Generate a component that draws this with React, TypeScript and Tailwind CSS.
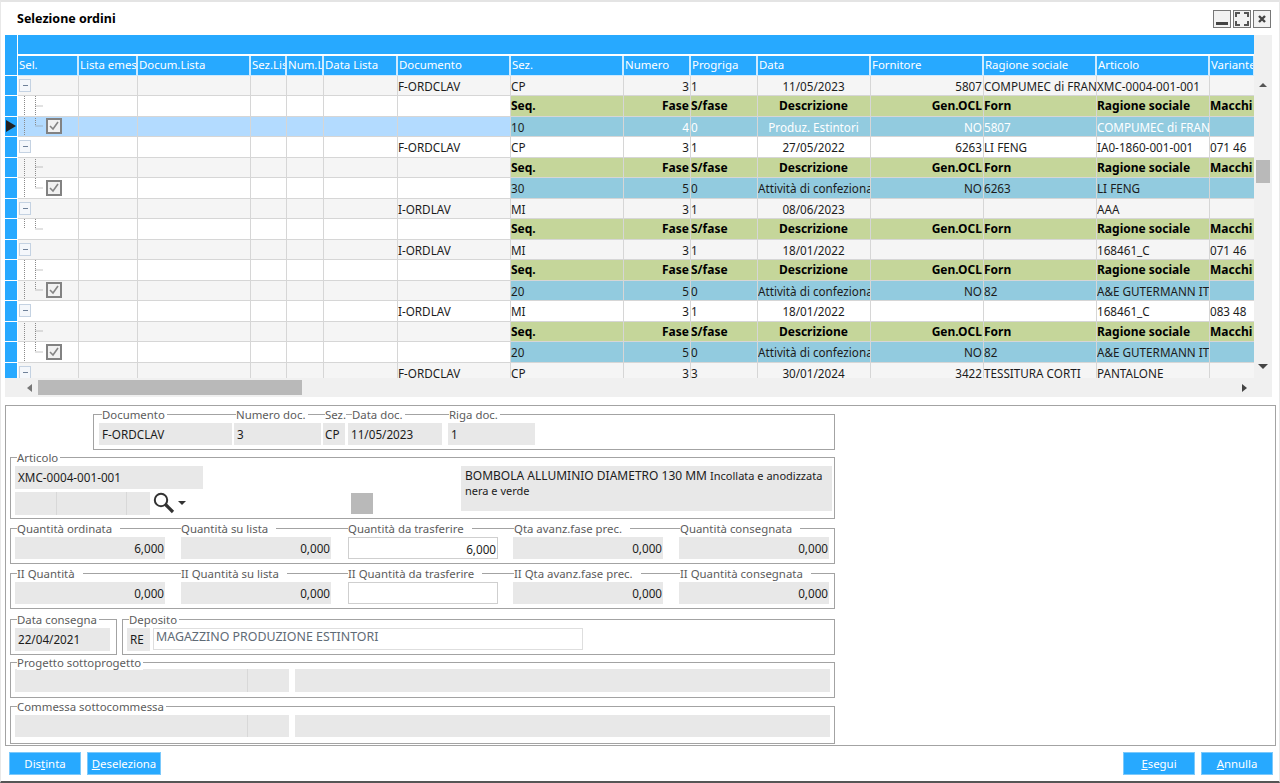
import React from "react";

const colsWide = "grid grid-cols-[61px_59px_113px_36px_37px_74px_113px_113px_67px_67px_113px_113px_113px_113px_45px] shrink-0";
const cell = "border-r border-b border-[#d6d6d6] h-full pr-[1px] overflow-hidden whitespace-nowrap leading-[20px]";
const heads = ["Sel.", "Lista emes", "Docum.Lista", "Sez.Lis", "Num.L", "Data Lista", "Documento", "Sez.", "Numero", "Progriga", "Data", "Fornitore", "Ragione sociale", "Articolo", "Variante"];

type Row =
  | { t: "m"; v: string[] }
  | { t: "h"; last?: boolean }
  | { t: "d"; v: string[]; sel?: boolean };

const rows: Row[] = [
  { t: "m", v: ["F-ORDCLAV", "CP", "3", "1", "11/05/2023", "5807", "COMPUMEC di FRAN", "XMC-0004-001-001", ""] },
  { t: "h" },
  { t: "d", sel: true, v: ["10", "4", "0", "Produz. Estintori", "NO", "5807", "COMPUMEC di FRAN", ""] },
  { t: "m", v: ["F-ORDCLAV", "CP", "3", "1", "27/05/2022", "6263", "LI FENG", "IA0-1860-001-001", "071 46"] },
  { t: "h" },
  { t: "d", v: ["30", "5", "0", "Attività di confezionamento", "NO", "6263", "LI FENG", ""] },
  { t: "m", v: ["I-ORDLAV", "MI", "3", "1", "08/06/2023", "", "", "AAA", ""] },
  { t: "h", last: true },
  { t: "m", v: ["I-ORDLAV", "MI", "3", "1", "18/01/2022", "", "", "168461_C", "071 46"] },
  { t: "h" },
  { t: "d", v: ["20", "5", "0", "Attività di confezionamento", "NO", "82", "A&E GUTERMANN IT", ""] },
  { t: "m", v: ["I-ORDLAV", "MI", "3", "1", "18/01/2022", "", "", "168461_C", "083 48"] },
  { t: "h" },
  { t: "d", v: ["20", "5", "0", "Attività di confezionamento", "NO", "82", "A&E GUTERMANN IT", ""] },
  { t: "m", v: ["F-ORDCLAV", "CP", "3", "3", "30/01/2024", "3422", "TESSITURA CORTI", "PANTALONE", ""] },
];

function Tree({ kind }: { kind: "h" | "hl" | "d" }) {
  return (
    <svg width="28" height="20" className="shrink-0" fill="none" stroke="#8a8a8a" strokeWidth="1" strokeDasharray="1 1">
      {kind !== "hl" && <path d="M6.5 0V20" />}
      {kind === "hl" && <path d="M6.5 0V10" />}
      <path d={kind === "h" ? "M17.5 0V20M17.5 10H25" : "M17.5 0V10M17.5 10H25"} />
    </svg>
  );
}

function Check() {
  return (
    <svg width="16" height="16" className="shrink-0" viewBox="0 0 16 16" fill="none">
      <rect x="1" y="1" width="14" height="14" fill="#f1f1f1" stroke="#828282" strokeWidth="2" />
      <path d="M4 8l3 3 5-7" stroke="#858585" strokeWidth="1.6" />
    </svg>
  );
}

function Minus() {
  return (
    <span className="flex items-center justify-center w-[12px] h-[13px] ml-[1px] bg-[#f4f7fb] border border-[#c4d2e2]">
      <span className="w-[5px] h-[1px] bg-[#6f8199]" />
    </span>
  );
}

function LeftCells({ row, bg }: { row: Row; bg: string }) {
  const widths = [1, 2, 3, 4, 5];
  return (
    <>
      <div className={`${cell} ${bg} flex items-center !pr-0`}>
        {row.t === "m" && <Minus />}
        {row.t === "h" && <Tree kind={row.last ? "hl" : "h"} />}
        {row.t === "d" && (
          <>
            <Tree kind="d" />
            <Check />
          </>
        )}
      </div>
      {widths.map((i) => (
        <div key={i} className={`${cell} ${bg}`} />
      ))}
    </>
  );
}

function GridRow({ row, i }: { row: Row; i: number }) {
  const stripe = i % 2 === 0 ? "bg-[#f5f5f5]" : "bg-white";
  if (row.t === "m") {
    const [doc, sez, num, prog, data, forn, rag, art, vari] = row.v;
    return (
      <div className={`${colsWide} h-[20.5px]`}>
        <LeftCells row={row} bg={stripe} />
        <div className={`${cell} ${stripe}`}>{doc}</div>
        <div className={`${cell} ${stripe}`}>{sez}</div>
        <div className={`${cell} ${stripe} text-right`}>{num}</div>
        <div className={`${cell} ${stripe}`}>{prog}</div>
        <div className={`${cell} ${stripe} text-center`}>{data}</div>
        <div className={`${cell} ${stripe} text-right`}>{forn}</div>
        <div className={`${cell} ${stripe}`}>{rag}</div>
        <div className={`${cell} ${stripe}`}>{art}</div>
        <div className={`${cell} ${stripe}`}>{vari}</div>
      </div>
    );
  }
  if (row.t === "h") {
    const g = "bg-[#c5d69a] font-bold text-[12px] text-black";
    return (
      <div className={`${colsWide} h-[20.5px]`}>
        <LeftCells row={row} bg={stripe} />
        <div className={`${cell} ${stripe}`} />
        <div className={`${cell} ${g}`}>Seq.</div>
        <div className={`${cell} ${g} text-right`}>Fase</div>
        <div className={`${cell} ${g}`}>S/fase</div>
        <div className={`${cell} ${g} text-center`}>Descrizione</div>
        <div className={`${cell} ${g} text-right`}>Gen.OCL</div>
        <div className={`${cell} ${g}`}>Forn</div>
        <div className={`${cell} ${g}`}>Ragione sociale</div>
        <div className={`${cell} ${g}`}>Macchi</div>
      </div>
    );
  }
  const left = row.sel ? "bg-[#b3dbff]" : stripe;
  const d = "bg-[#92cbdf]";
  const w = row.sel ? "text-white" : "";
  const [seq, fase, sf, des, gen, forn, rag, mac] = row.v;
  return (
    <div className={`${colsWide} h-[20.5px]`}>
      <LeftCells row={row} bg={left} />
      <div className={`${cell} ${left}`} />
      <div className={`${cell} ${d}`}>{seq}</div>
      <div className={`${cell} ${d} ${w} text-right`}>{fase}</div>
      <div className={`${cell} ${d} ${w}`}>{sf}</div>
      <div className={`${cell} ${d} ${w} ${row.sel ? "text-center" : ""}`}>{des}</div>
      <div className={`${cell} ${d} ${w} text-right`}>{gen}</div>
      <div className={`${cell} ${d} ${w}`}>{forn}</div>
      <div className={`${cell} ${d} ${w}`}>{rag}</div>
      <div className={`${cell} ${d}`}>{mac}</div>
    </div>
  );
}

function Group({ className, children }: { className: string; children?: React.ReactNode }) {
  return <div className={`relative border border-[#a3a3a3] flex shrink-0 ${className}`}>{children}</div>;
}

function Legend({ className, children }: { className: string; children: React.ReactNode }) {
  return (
    <span className={`absolute -top-[7px] bg-white leading-[14px] text-[11.4px] text-[#5c5c5c] whitespace-nowrap ${className}`}>{children}</span>
  );
}

function Input({ className, children }: { className: string; children?: React.ReactNode }) {
  return (
    <div className={`h-[23px] bg-[#e8e8e8] px-[3px] leading-[23px] whitespace-nowrap overflow-hidden shrink-0 ${className}`}>{children}</div>
  );
}

function QtyGroup({ labels, values, className }: { labels: string[]; values: string[]; className: string }) {
  const pos = ["left-[6px]", "left-[170px]", "left-[337px]", "left-[503px]", "left-[669px]"];
  return (
    <Group className={`w-[825px] h-[36px] pl-[4px] pt-[8px] gap-[16px] ${className}`}>
      {labels.map((l, i) => (
        <Legend key={l} className={`${pos[i]} pr-[8px]`}>
          {l}
        </Legend>
      ))}
      {values.map((v, i) => (
        <Input key={i} className={`w-[150px] text-right !h-[22px] !pr-[1px] ${i === 2 ? "!bg-white border border-[#cfcfcf] ml-[1px] -mr-[1px]" : ""}`}>
          {v}
        </Input>
      ))}
    </Group>
  );
}

function Btn({ children, className = "" }: { children: React.ReactNode; className?: string }) {
  return (
    <button className={`h-[23px] bg-[#27a9ff] border border-[#7cc9fb] text-white text-[11.4px] text-center leading-[21px] ${className}`}>{children}</button>
  );
}

function WinBtn({ children }: { children: React.ReactNode }) {
  return (
    <span className="w-[18px] h-[18px] border border-[#777] bg-[#f2f2f2] flex items-center justify-center">{children}</span>
  );
}

export default function App() {
  return (
    <div className="w-[1280px] h-[783px] bg-white border-t-2 border-t-[#e4e4e4] border-b-2 border-b-[#555] border-x border-x-[#e8e8e8] flex flex-col overflow-hidden text-[11.7px] text-[#1c1c1c] font-['Noto_Sans','Open_Sans',sans-serif]">
      <div className="h-[33px] shrink-0 flex items-start justify-between pl-[16px] pr-[8px] pt-[8px]">
        <span className="font-bold text-black text-[12.5px] leading-[18px]">Selezione ordini</span>
        <div className="flex gap-[2px]">
          <WinBtn>
            <span className="w-[12px] h-[3px] bg-[#444] mt-[9px]" />
          </WinBtn>
          <WinBtn>
            <svg width="14" height="14" fill="none" stroke="#555" strokeWidth="2">
              <path d="M1 5V1H5M9 1H13V5M13 9V13H9M5 13H1V9" />
            </svg>
          </WinBtn>
          <WinBtn>
            <svg width="10" height="10" stroke="#444" strokeWidth="2.4">
              <path d="M2 2L8 8M8 2L2 8" />
            </svg>
          </WinBtn>
        </div>
      </div>

      <div className="ml-[4px] flex h-[362px] shrink-0 w-[1267px]">
        <div className="w-[1249px] flex flex-col">
          <div className="h-[343px] shrink-0 flex overflow-hidden">
            <div className="w-[12px] shrink-0 mr-[1px] flex flex-col">
              <div className="h-[40.5px] shrink-0 bg-[#27a9ff] border-b border-white" />
              {rows.map((r, i) => (
                <div key={i} className="h-[20.5px] shrink-0 bg-[#27a9ff] border-b border-white flex items-center">
                  {i === 2 && <span className="w-0 h-0 ml-[1px] border-y-[6px] border-y-transparent border-l-[10px] border-l-[#222]" />}
                </div>
              ))}
            </div>
            <div className="flex-1 min-w-0 flex flex-col">
              <div className="h-[20.5px] shrink-0 bg-[#27a9ff] border-b-2 border-white" />
              <div className={`${colsWide} h-[20px]`}>
                {heads.map((h) => (
                  <div key={h} className="bg-[#27a9ff] text-white text-[11.4px] border-r-2 border-b border-[#cdeaff] pl-[1px] overflow-hidden whitespace-nowrap leading-[17px]">
                    {h}
                  </div>
                ))}
              </div>
              {rows.map((r, i) => (
                <GridRow key={i} row={r} i={i} />
              ))}
            </div>
          </div>
          <div className="h-[19px] shrink-0 bg-[#f0f0f0] flex items-center pl-[22px] pr-[7px]">
            <span className="w-0 h-0 border-y-[4px] border-y-transparent border-r-[5px] border-r-[#777]" />
            <span className="ml-[6px] w-[264px] h-[15px] bg-[#b9b9b9]" />
            <span className="ml-auto w-0 h-0 border-y-[4px] border-y-transparent border-l-[5px] border-l-[#444]" />
          </div>
        </div>
        <div className="w-[18px] bg-[#f0f0f0] flex flex-col items-center pt-[48px] pb-[28px]">
          <span className="w-0 h-0 border-x-[4px] border-x-transparent border-b-[4px] border-b-[#555]" />
          <span className="mt-[73px] w-[14px] h-[23px] bg-[#b9b9b9]" />
          <span className="mt-auto w-0 h-0 border-x-[5px] border-x-transparent border-t-[5px] border-t-[#444]" />
        </div>
      </div>

      <div className="ml-[4px] mt-[8px] w-[1271px] h-[341px] shrink-0 border border-[#a3a3a3] pl-[4px] pt-[8px] flex flex-col">
        <Group className="ml-[83px] w-[742px] h-[36px] pl-[5px] pt-[8px]">
          <Legend className="left-[8px] pr-[2px]">Documento</Legend>
          <Legend className="left-[142px] pr-[2px]">Numero doc.</Legend>
          <Legend className="left-[231px]">Sez.</Legend>
          <Legend className="left-[258px] pr-[2px]">Data doc.</Legend>
          <Legend className="left-[355px] pr-[2px]">Riga doc.</Legend>
          <Input className="w-[133px] !h-[22px]">F-ORDCLAV</Input>
          <Input className="w-[87px] ml-[2px] !h-[22px]">3</Input>
          <Input className="w-[22px] ml-[2px] !h-[22px] !px-[2px]">CP</Input>
          <Input className="w-[94px] ml-[3px] !h-[22px]">11/05/2023</Input>
          <Input className="w-[87px] ml-[6px] !h-[22px]">1</Input>
        </Group>

        <Group className="mt-[7px] w-[825px] h-[62px] pl-[4px] pt-[8px]">
          <Legend className="left-[6px] pr-[2px]">Articolo</Legend>
          <div className="flex flex-col gap-[2px] w-[188px] shrink-0">
            <Input className="w-[188px]">XMC-0004-001-001</Input>
            <div className="flex items-center">
              <Input className="w-[42px] border-r border-[#d8d8d8]" />
              <Input className="w-[70px] border-r border-[#d8d8d8]" />
              <Input className="w-[23px]" />
              <svg width="24" height="24" viewBox="0 0 24 24" className="ml-[2px] shrink-0" fill="none" stroke="#333">
                <circle cx="9" cy="9" r="6.2" strokeWidth="2" />
                <path d="M13.5 13.5L21 21" strokeWidth="3.2" />
              </svg>
              <span className="ml-[2px] w-0 h-0 border-x-[4px] border-x-transparent border-t-[4px] border-t-[#333]" />
            </div>
          </div>
          <span className="ml-[148px] mt-[27px] w-[22px] h-[21px] bg-[#b9b9b9] shrink-0" />
          <div className="ml-[88px] w-[371px] h-[45px] bg-[#e8e8e8] px-[4px] pt-[2px] leading-[15px] shrink-0 whitespace-nowrap">
            <span className="text-[12px]">BOMBOLA ALLUMINIO DIAMETRO 130 MM</span> <span className="text-[11px]">Incollata e anodizzata</span>
            <br />
            <span className="text-[11px]">nera e verde</span>
          </div>
        </Group>

        <QtyGroup
          className="mt-[9px]"
          labels={["Quantità ordinata", "Quantità su lista", "Quantità da trasferire", "Qta avanz.fase prec.", "Quantità consegnata"]}
          values={["6,000", "0,000", "6,000", "0,000", "0,000"]}
        />
        <QtyGroup
          className="mt-[9px]"
          labels={["II Quantità", "II Quantità su lista", "II Quantità da trasferire", "II Qta avanz.fase prec.", "II Quantità consegnata"]}
          values={["0,000", "0,000", "", "0,000", "0,000"]}
        />

        <div className="flex mt-[10px] gap-[5px]">
          <Group className="w-[107px] h-[36px] pl-[4px] pt-[8px]">
            <Legend className="left-[6px] pr-[2px]">Data consegna</Legend>
            <Input className="w-[95px]">22/04/2021</Input>
          </Group>
          <Group className="w-[713px] h-[36px] pl-[4px] pt-[8px]">
            <Legend className="left-[6px] pr-[2px]">Deposito</Legend>
            <Input className="w-[23px]">RE</Input>
            <div className="ml-[3px] w-[430px] h-[22px] border border-[#dedede] bg-white px-[2px] leading-[16px] text-[12.4px] text-[#5f6b76] whitespace-nowrap">
              MAGAZZINO PRODUZIONE ESTINTORI
            </div>
          </Group>
        </div>

        <Group className="mt-[7px] w-[825px] h-[36px] pl-[4px] pt-[6px]">
          <Legend className="left-[6px] pr-[2px]">Progetto sottoprogetto</Legend>
          <Input className="w-[233px] border-r border-[#d8d8d8]" />
          <Input className="w-[41px]" />
          <Input className="w-[535px] ml-[6px]" />
        </Group>

        <Group className="mt-[8px] w-[825px] h-[38px] pl-[4px] pt-[8px]">
          <Legend className="left-[6px] pr-[2px]">Commessa sottocommessa</Legend>
          <Input className="w-[233px] border-r border-[#d8d8d8] !h-[22px]" />
          <Input className="w-[41px] !h-[22px]" />
          <Input className="w-[535px] ml-[6px] !h-[22px]" />
        </Group>
      </div>

      <div className="flex pl-[8px] pr-[6px] mt-[6px] gap-[6px]">
        <Btn className="w-[72px]">
          Dis<u>t</u>inta
        </Btn>
        <Btn className="w-[74px]">
          <u>D</u>eseleziona
        </Btn>
        <Btn className="w-[72px] ml-auto">
          <u>E</u>segui
        </Btn>
        <Btn className="w-[72px]">
          <u>A</u>nnulla
        </Btn>
      </div>
    </div>
  );
}
